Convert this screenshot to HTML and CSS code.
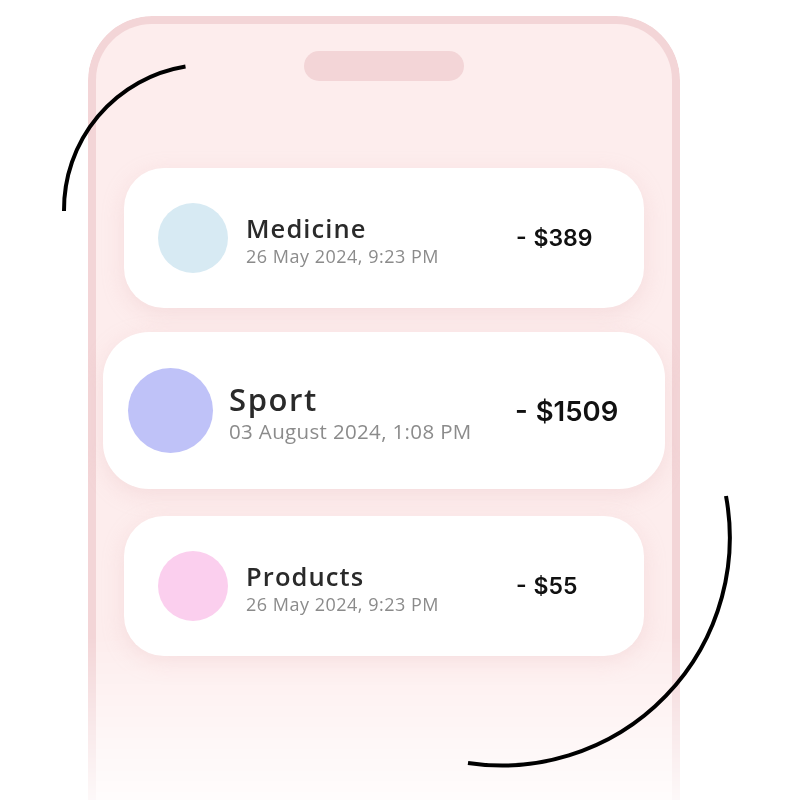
FILE: index.html
```html
<!DOCTYPE html>
<html lang="en">
<head>
<meta charset="utf-8">
<title>Transactions</title>
<link rel="stylesheet" href="styles.css">
</head>
<body>
<div class="stage">
  <div class="phone">
    <div class="notch"></div>
    <div class="list">
      <div class="card">
        <div class="dot dot-blue"></div>
        <div class="info">
          <div class="title">Medicine</div>
          <div class="date">26 May 2024, 9:23 PM</div>
        </div>
        <div class="amount">- $389</div>
      </div>
      <div class="card card-big">
        <div class="dot dot-violet"></div>
        <div class="info">
          <div class="title">Sport</div>
          <div class="date">03 August 2024, 1:08 PM</div>
        </div>
        <div class="amount">- $1509</div>
      </div>
      <div class="card card-last">
        <div class="dot dot-pink"></div>
        <div class="info">
          <div class="title">Products</div>
          <div class="date">26 May 2024, 9:23 PM</div>
        </div>
        <div class="amount">- $55</div>
      </div>
    </div>
  </div>
  <svg class="arcs" width="800" height="800" viewBox="0 0 800 800" aria-hidden="true">
    <path d="M 64 211 A 145 145 0 0 1 185.5 66.5" />
    <path d="M 726 496 A 228 228 0 0 1 468 763" />
  </svg>
</div>
</body>
</html>
```

FILE: styles.css
```css
html, body {
  margin: 0;
  padding: 0;
  background: #ffffff;
  overflow: hidden;
}

body {
  width: 800px;
  height: 800px;
  font-family: "Open Sans", "Noto Sans", sans-serif;
}

.stage {
  position: relative;
  width: 800px;
  height: 800px;
  overflow: hidden;
  padding-top: 16px;
  box-sizing: border-box;
}

.phone {
  margin-left: 88px;
  width: 592px;
  height: 820px;
  box-sizing: border-box;
  border: 8px solid #f3d5d7;
  border-bottom: none;
  border-radius: 64px 64px 0 0;
  background: #fdeded;
  display: flex;
  flex-direction: column;
  align-items: center;
  -webkit-mask-image: linear-gradient(to bottom, #000 0px, #000 620px, rgba(0,0,0,0.12) 790px);
  mask-image: linear-gradient(to bottom, #000 0px, #000 620px, rgba(0,0,0,0.12) 790px);
}

.notch {
  margin-top: 27px;
  width: 160px;
  height: 30px;
  border-radius: 15px;
  background: #f3d5d7;
}

.list {
  margin-top: 87px;
  display: flex;
  flex-direction: column;
  align-items: center;
  gap: 24px;
}

.card {
  width: 520px;
  height: 140px;
  box-sizing: border-box;
  padding-left: 34px;
  border-radius: 40px;
  background: #ffffff;
  display: flex;
  align-items: center;
  box-shadow: 0 6px 22px rgba(225, 175, 178, 0.28);
}

.card-last {
  margin-top: 3px;
}

.dot {
  flex: 0 0 70px;
  width: 70px;
  height: 70px;
  border-radius: 50%;
  margin-right: 18px;
}

.dot-blue { background: #d7eaf3; }
.dot-violet { background: #bfc2f8; }
.dot-pink { background: #fbcfee; }

.info {
  flex: 0 0 270px;
  display: flex;
  flex-direction: column;
  padding-top: 3px;
}

.title {
  font-size: 25.5px;
  line-height: 28px;
  font-weight: 550;
  color: #2a2a2a;
  letter-spacing: 1.1px;
}

.date {
  margin-top: 4px;
  font-size: 18px;
  line-height: 20px;
  color: #8b8b8b;
  letter-spacing: 0.5px;
}

.amount {
  font-family: "Inter", "Liberation Sans", sans-serif;
  font-size: 23px;
  font-weight: 600;
  color: #111111;
  word-spacing: 1px;
}

.card-big {
  width: 562px;
  height: 157px;
  padding-left: 25px;
  border-radius: 46px;
}

.card-big .dot {
  flex-basis: 85px;
  width: 85px;
  height: 85px;
  margin-right: 16px;
}

.card-big .info {
  flex-basis: 286px;
}

.card-big .title {
  font-size: 31px;
  line-height: 34px;
  letter-spacing: 1.6px;
}

.card-big .date {
  margin-top: 3px;
  font-size: 20.5px;
  line-height: 24px;
  letter-spacing: 0.35px;
}

.card-big .amount {
  font-size: 27.5px;
}

.arcs {
  position: absolute;
  left: 0;
  top: 0;
  pointer-events: none;
}

.arcs path {
  fill: none;
  stroke: #000000;
  stroke-width: 4;
  stroke-linecap: butt;
}
```
